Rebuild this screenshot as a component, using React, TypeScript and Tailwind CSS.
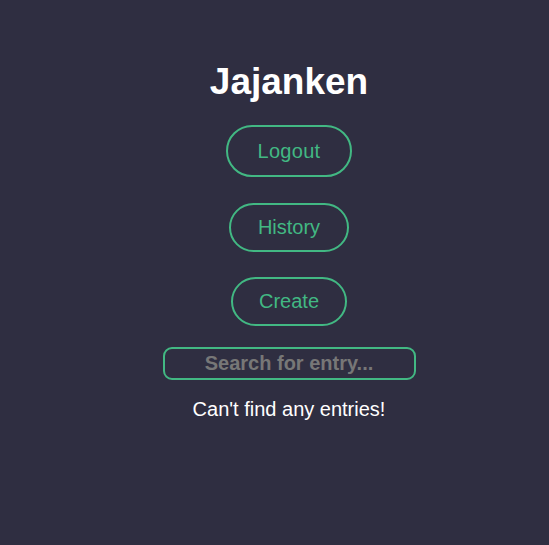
import React from "react";

export default function App() {
  return (
    <div
      className="min-h-[545px] w-full bg-[#2f2e41] pl-[29px] flex flex-col items-center"
      style={{ fontFamily: '"Liberation Sans", Arial, sans-serif' }}
    >
      <h1 className="mt-[61px] text-[37px] font-bold text-white leading-[42px]">Jajanken</h1>
      <button className="mt-[22px] h-[52px] px-[30px] rounded-full border-2 border-[#42b883] text-[#42b883] text-[20px] leading-[23px] tracking-[0.3px]">
        Logout
      </button>
      <button className="mt-[26px] h-[49px] px-[27px] rounded-full border-2 border-[#42b883] text-[#42b883] text-[20px] leading-[23px]">
        History
      </button>
      <button className="mt-[25px] h-[49px] px-[26px] rounded-full border-2 border-[#42b883] text-[#42b883] text-[20px] leading-[23px]">
        Create
      </button>
      <input
        className="mt-[21px] w-[253px] h-[33px] rounded-[9px] border-2 border-[#42b883] bg-transparent text-center text-[20px] font-bold text-white placeholder:text-[#777777] outline-none"
        placeholder="Search for entry..."
      />
      <p className="mt-[18px] text-[20px] leading-[23px] text-white">Can't find any entries!</p>
    </div>
  );
}
